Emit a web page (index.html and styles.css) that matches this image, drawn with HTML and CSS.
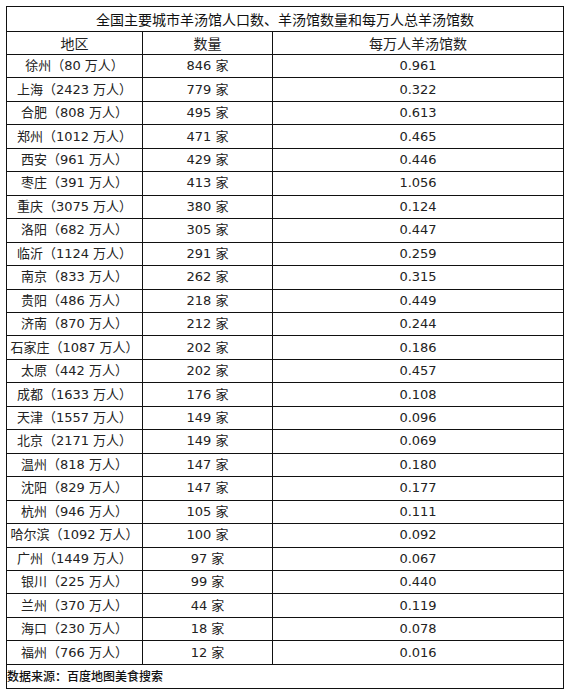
FILE: index.html
```html
<!DOCTYPE html>
<html lang="zh-CN">
<head>
<meta charset="utf-8">
<title>全国主要城市羊汤馆</title>
<link rel="stylesheet" href="styles.css">
</head>
<body>
<table class="data">
  <colgroup>
    <col class="c1"><col class="c2"><col class="c3">
  </colgroup>
  <tr class="title"><td colspan="3">全国主要城市羊汤馆人口数、羊汤馆数量和每万人总羊汤馆数</td></tr>
  <tr class="head"><td>地区</td><td>数量</td><td>每万人羊汤馆数</td></tr>
  <tr><td>徐州（80 万人）</td><td>846 家</td><td>0.961</td></tr>
  <tr><td>上海（2423 万人）</td><td>779 家</td><td>0.322</td></tr>
  <tr><td>合肥（808 万人）</td><td>495 家</td><td>0.613</td></tr>
  <tr><td>郑州（1012 万人）</td><td>471 家</td><td>0.465</td></tr>
  <tr><td>西安（961 万人）</td><td>429 家</td><td>0.446</td></tr>
  <tr><td>枣庄（391 万人）</td><td>413 家</td><td>1.056</td></tr>
  <tr><td>重庆（3075 万人）</td><td>380 家</td><td>0.124</td></tr>
  <tr><td>洛阳（682 万人）</td><td>305 家</td><td>0.447</td></tr>
  <tr><td>临沂（1124 万人）</td><td>291 家</td><td>0.259</td></tr>
  <tr><td>南京（833 万人）</td><td>262 家</td><td>0.315</td></tr>
  <tr><td>贵阳（486 万人）</td><td>218 家</td><td>0.449</td></tr>
  <tr><td>济南（870 万人）</td><td>212 家</td><td>0.244</td></tr>
  <tr><td>石家庄（1087 万人）</td><td>202 家</td><td>0.186</td></tr>
  <tr><td>太原（442 万人）</td><td>202 家</td><td>0.457</td></tr>
  <tr><td>成都（1633 万人）</td><td>176 家</td><td>0.108</td></tr>
  <tr><td>天津（1557 万人）</td><td>149 家</td><td>0.096</td></tr>
  <tr><td>北京（2171 万人）</td><td>149 家</td><td>0.069</td></tr>
  <tr><td>温州（818 万人）</td><td>147 家</td><td>0.180</td></tr>
  <tr><td>沈阳（829 万人）</td><td>147 家</td><td>0.177</td></tr>
  <tr><td>杭州（946 万人）</td><td>105 家</td><td>0.111</td></tr>
  <tr><td>哈尔滨（1092 万人）</td><td>100 家</td><td>0.092</td></tr>
  <tr><td>广州（1449 万人）</td><td>97 家</td><td>0.067</td></tr>
  <tr><td>银川（225 万人）</td><td>99 家</td><td>0.440</td></tr>
  <tr><td>兰州（370 万人）</td><td>44 家</td><td>0.119</td></tr>
  <tr><td>海口（230 万人）</td><td>18 家</td><td>0.078</td></tr>
  <tr><td>福州（766 万人）</td><td>12 家</td><td>0.016</td></tr>
  <tr class="foot"><td colspan="3">数据来源：百度地图美食搜索</td></tr>
</table>
</body>
</html>
```
FILE: styles.css
```css
html, body {
  margin: 0;
  padding: 0;
  background: #fff;
}
body {
  padding: 6px 0 0 6px;
  font-family: "DejaVu Sans", "Noto Sans CJK SC", sans-serif;
  color: #222;
}
.data {
  border-collapse: collapse;
  table-layout: fixed;
  width: 557px;
  font-size: 13px;
}
.c1 { width: 136px; }
.c2 { width: 130px; }
.c3 { width: 291px; }
.data td {
  border: 1px solid #111;
  padding: 0;
  text-align: center;
  vertical-align: middle;
  height: 22.46px;
  line-height: 16px;
  white-space: nowrap;
  overflow: hidden;
}
.data .title td {
  height: 24px;
  font-size: 14px;
  font-family: "Noto Sans CJK SC", sans-serif;
  color: #111;
}
.data .head td {
  height: 22px;
  font-size: 14px;
  font-family: "Noto Sans CJK SC", sans-serif;
}
.data .foot td {
  height: 23px;
  text-align: left;
  font-size: 12px;
  font-weight: 500;
  font-family: "Noto Sans CJK SC", sans-serif;
  color: #111;
}
```
